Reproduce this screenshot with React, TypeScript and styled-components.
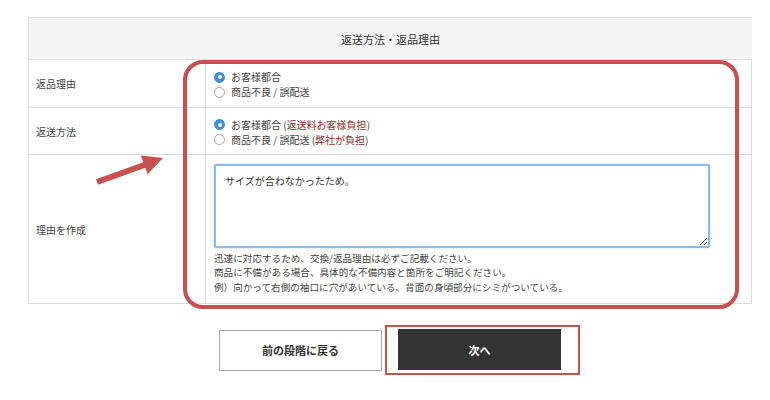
import React from 'react';
import styled, { createGlobalStyle } from 'styled-components';

const GlobalStyle = createGlobalStyle`
  body {
    margin: 0;
    background: #ffffff;
    font-family: "Noto Sans CJK JP", "Noto Sans", sans-serif;
    color: #333333;
  }
`;

interface Option {
  label: string;
  note?: string;
  checked?: boolean;
}

const reasonOptions: Option[] = [
  { label: 'お客様都合', checked: true },
  { label: '商品不良 / 誤配送' },
];

const methodOptions: Option[] = [
  { label: 'お客様都合', note: '返送料お客様負担', checked: true },
  { label: '商品不良 / 誤配送', note: '弊社が負担' },
];

const RadioList: React.FC<{ options: Option[] }> = ({ options }) => (
  <Radios>
    {options.map((o) => (
      <RadioLine key={o.label}>
        <RadioDot checked={!!o.checked} />
        <span>
          {o.label}
          {o.note && (
            <>
              {' ('}
              <Note>{o.note}</Note>
              {')'}
            </>
          )}
        </span>
      </RadioLine>
    ))}
  </Radios>
);

const App: React.FC = () => {
  return (
    <>
      <GlobalStyle />
      <Page>
        <TableWrap>
          <Table>
            <HeaderCell>返送方法・返品理由</HeaderCell>

            <LabelCell height={48}>返品理由</LabelCell>
            <ValueCell>
              <RadioList options={reasonOptions} />
            </ValueCell>

            <LabelCell height={47}>返送方法</LabelCell>
            <ValueCell>
              <RadioList options={methodOptions} />
            </ValueCell>

            <LabelCell height={148} last>理由を作成</LabelCell>
            <ValueCell last>
              <ReasonBox defaultValue="サイズが合わなかったため。" />
              <Help>
                迅速に対応するため、交換/返品理由は必ずご記載ください。
                <br />
                商品に不備がある場合、具体的な不備内容と箇所をご明記ください。
                <br />
                例）向かって右側の袖口に穴があいている、背面の身頃部分にシミがついている。
              </Help>
            </ValueCell>
          </Table>

          <Highlight />
          <Arrow width="80" height="40" viewBox="0 0 80 40">
            <line x1="7" y1="32" x2="57" y2="14" stroke="#c8504e" strokeWidth="6" />
            <polygon points="73,8 57.6,24.2 50.8,5.4" fill="#c8504e" />
          </Arrow>
        </TableWrap>

        <Buttons>
          <BackButton>前の段階に戻る</BackButton>
          <NextFrame>
            <NextButton>次へ</NextButton>
          </NextFrame>
        </Buttons>
      </Page>
    </>
  );
};

export default App;

const Page = styled.div`
  width: 770px;
  height: 400px;
  padding-top: 17px;
  box-sizing: border-box;
  display: flex;
  flex-direction: column;
`;

const TableWrap = styled.div`
  position: relative;
  margin-left: 28px;
  width: 724px;
`;

const Table = styled.div`
  display: grid;
  grid-template-columns: 177px 1fr;
  border: 1px solid #dddddd;
  box-sizing: border-box;
`;

const HeaderCell = styled.div`
  grid-column: 1 / 3;
  height: 42px;
  display: flex;
  align-items: center;
  justify-content: center;
  background: #f4f4f4;
  border-bottom: 1px solid #dddddd;
  font-size: 11px;
  color: #333333;
  box-sizing: border-box;
`;

const LabelCell = styled.div<{ height: number; last?: boolean }>`
  height: ${({ height }) => height}px;
  display: flex;
  align-items: center;
  padding-left: 7px;
  font-size: 10px;
  color: #444444;
  border-right: 1px solid #dddddd;
  border-bottom: ${({ last }) => (last ? 'none' : '1px solid #dddddd')};
  box-sizing: border-box;
`;

const ValueCell = styled.div<{ last?: boolean }>`
  display: flex;
  flex-direction: column;
  justify-content: center;
  padding: 0 42px 0 8px;
  border-bottom: ${({ last }) => (last ? 'none' : '1px solid #dddddd')};
  box-sizing: border-box;
`;

const Radios = styled.div`
  display: flex;
  flex-direction: column;
  gap: 1px;
  padding-top: 2px;
`;

const RadioLine = styled.label`
  display: flex;
  align-items: center;
  gap: 6px;
  font-size: 10px;
  line-height: 14px;
  color: #444444;
`;

const RadioDot = styled.span<{ checked: boolean }>`
  width: 11px;
  height: 11px;
  border-radius: 50%;
  box-sizing: border-box;
  flex-shrink: 0;
  background: ${({ checked }) => (checked ? '#3d8ee6' : '#ffffff')};
  border: 1px solid ${({ checked }) => (checked ? '#3d8ee6' : '#a9a9a9')};
  display: flex;
  align-items: center;
  justify-content: center;

  &::after {
    content: '';
    width: 4px;
    height: 4px;
    border-radius: 50%;
    background: #ffffff;
    display: ${({ checked }) => (checked ? 'block' : 'none')};
  }
`;

const Note = styled.span`
  color: #9c2a2a;
`;

const ReasonBox = styled.textarea`
  width: 496px;
  height: 84px;
  box-sizing: border-box;
  border: 2px solid #8cbcec;
  border-radius: 2px;
  box-shadow: 0 0 2px #a9cdf2;
  padding: 7px 9px;
  font-family: "Noto Sans CJK JP", "Noto Sans", sans-serif;
  font-size: 10px;
  color: #333333;
  resize: vertical;
  outline: none;
`;

const Help = styled.p`
  margin: 3px 0 0;
  font-size: 9.6px;
  line-height: 14.5px;
  color: #444444;
`;

const Highlight = styled.div`
  position: absolute;
  left: 155px;
  top: 43px;
  width: 556px;
  height: 249px;
  border: 4px solid #c8504e;
  border-radius: 20px;
  box-sizing: border-box;
  pointer-events: none;
`;

const Arrow = styled.svg`
  position: absolute;
  left: 62px;
  top: 133px;
`;

const Buttons = styled.div`
  display: flex;
  align-items: center;
  margin-top: 21px;
  margin-left: 219px;
  gap: 3px;
`;

const BackButton = styled.button`
  width: 163px;
  height: 41px;
  background: #ffffff;
  border: 1px solid #aaaaaa;
  font-family: "Noto Sans CJK JP", "Noto Sans", sans-serif;
  font-size: 11px;
  font-weight: bold;
  color: #333333;
`;

const NextFrame = styled.div`
  border: 2px solid #c8504e;
  padding: 2px 17px 3px 11px;
`;

const NextButton = styled.button`
  display: block;
  width: 163px;
  height: 41px;
  background: #333333;
  border: none;
  font-family: "Noto Sans CJK JP", "Noto Sans", sans-serif;
  font-size: 11px;
  font-weight: bold;
  color: #ffffff;
`;
